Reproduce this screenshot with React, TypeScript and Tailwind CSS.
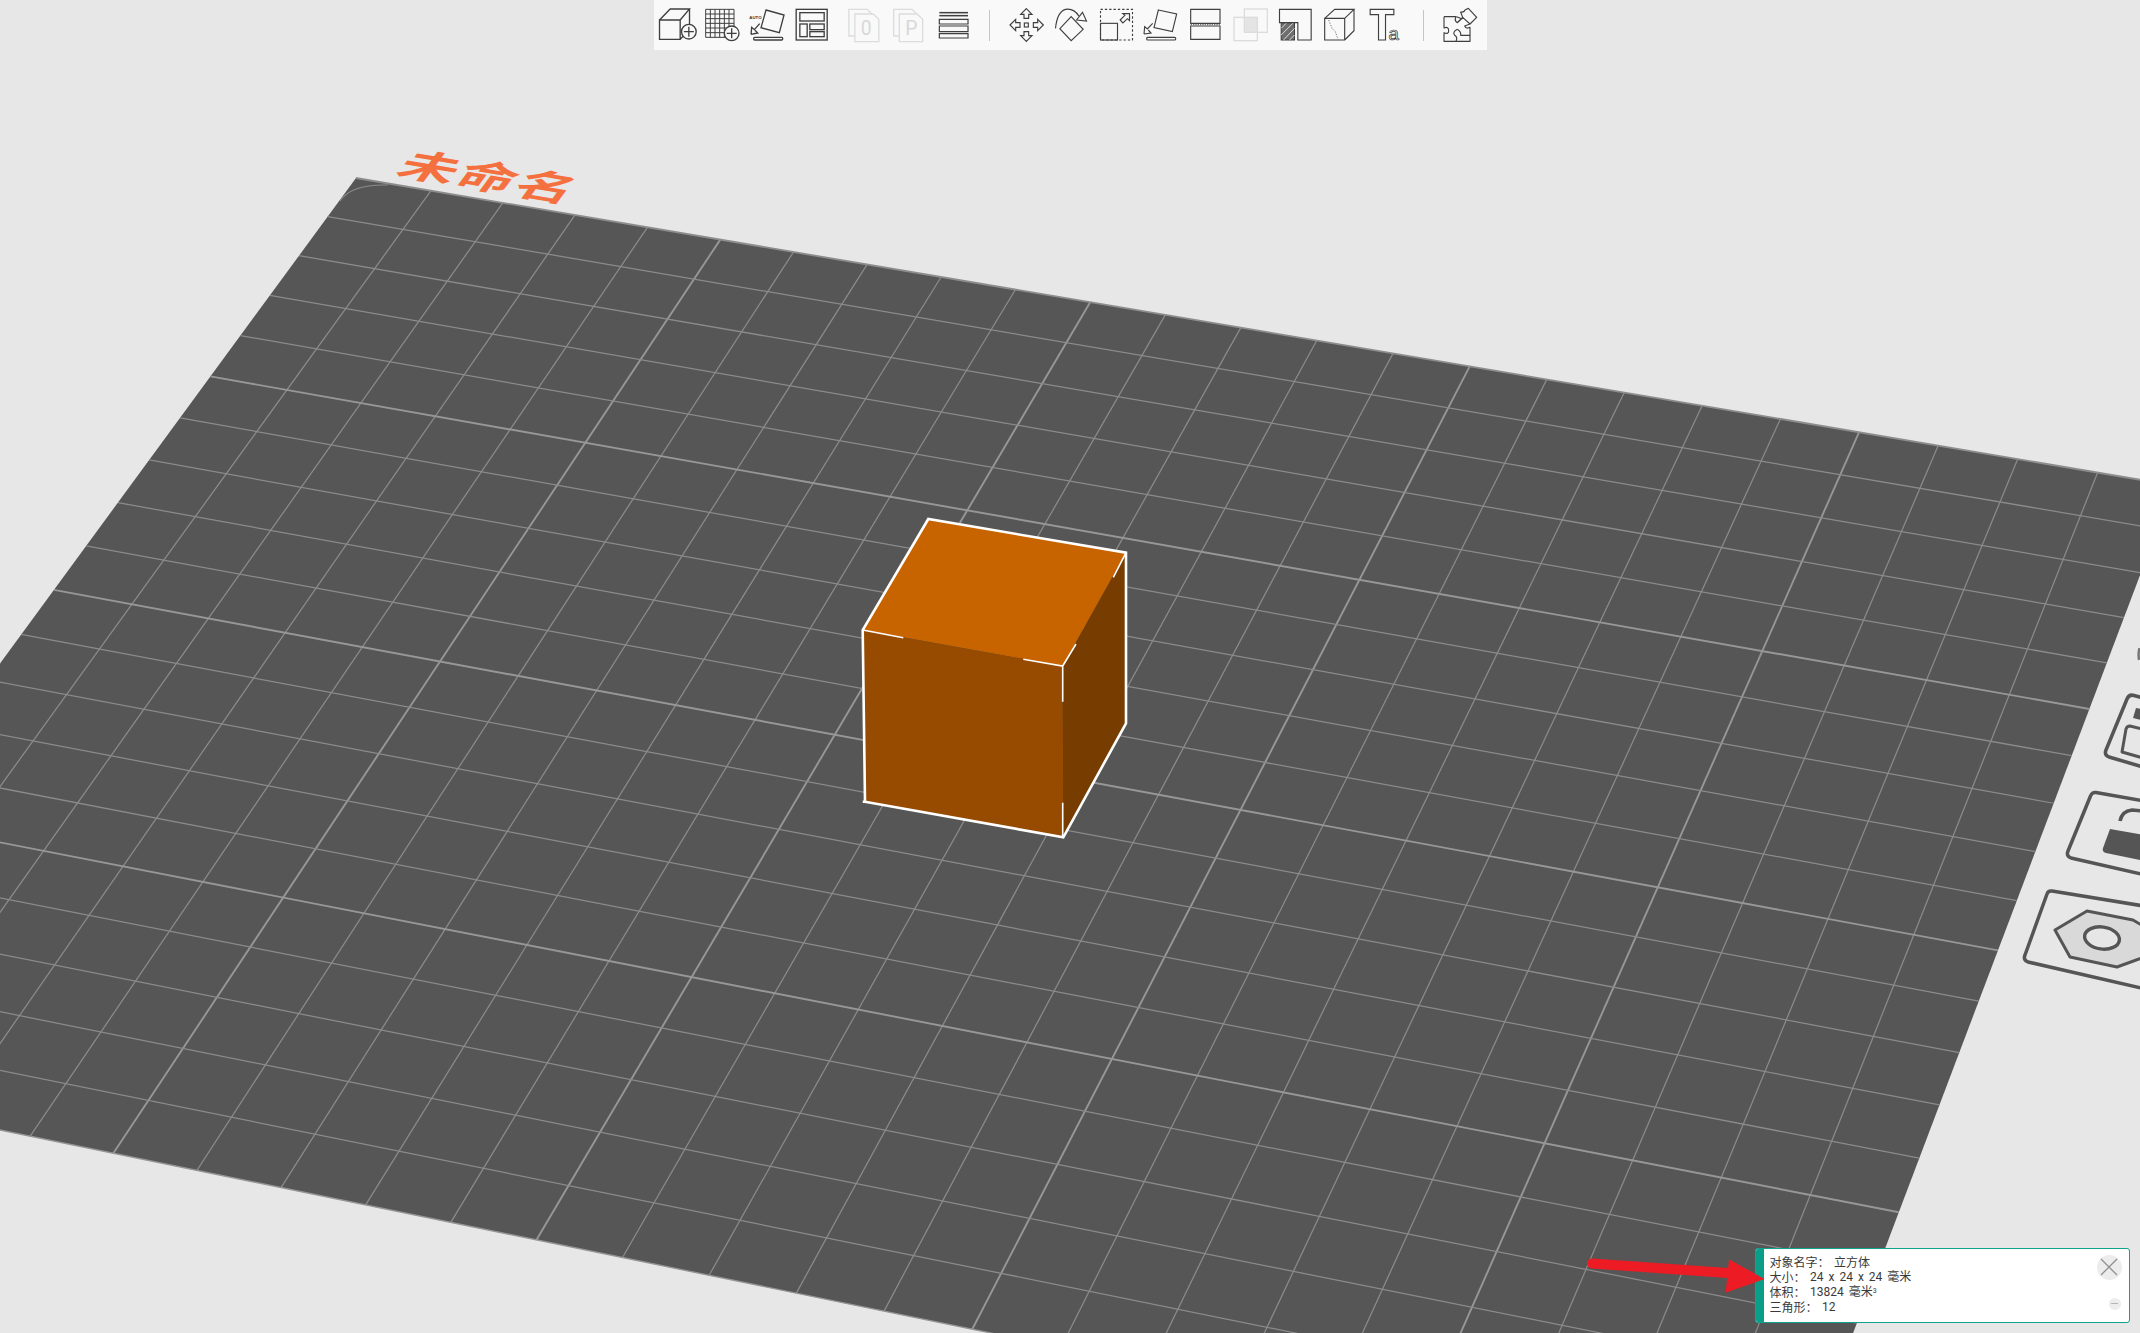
import React from "react";

type P = [number, number];
const TL: P = [356, 178];
const TR: P = [2174, 485.5];
const BR: P = [1791, 1497];
const BL: P = [-297.5, 1069];

function makeMap(p0: P, p1: P, p2: P, p3: P) {
  const dx1 = p1[0] - p2[0], dx2 = p3[0] - p2[0], sx = p0[0] - p1[0] + p2[0] - p3[0];
  const dy1 = p1[1] - p2[1], dy2 = p3[1] - p2[1], sy = p0[1] - p1[1] + p2[1] - p3[1];
  const den = dx1 * dy2 - dx2 * dy1;
  const g = (sx * dy2 - dx2 * sy) / den, h = (dx1 * sy - sx * dy1) / den;
  const a = p1[0] - p0[0] + g * p1[0], b = p3[0] - p0[0] + h * p3[0], c = p0[0];
  const d = p1[1] - p0[1] + g * p1[1], e = p3[1] - p0[1] + h * p3[1], f = p0[1];
  return (u: number, v: number): P => {
    const w = g * u + h * v + 1;
    return [(a * u + b * v + c) / w, (d * u + e * v + f) / w];
  };
}
const map = makeMap(TL, TR, BR, BL);
const COLS = 24, ROWS = 20;

function GridLine({ a, b, major }: { a: P; b: P; major: boolean }) {
  return <line x1={a[0]} y1={a[1]} x2={b[0]} y2={b[1]} stroke={major ? "#979797" : "#8b8b8b"} strokeWidth={major ? 1.9 : 1.25} />;
}

function Bed() {
  const lines: React.ReactNode[] = [];
  for (let i = 1; i < COLS; i++) lines.push(<GridLine key={"c" + i} a={map((i + 0.05) / COLS, 0)} b={map(i / COLS, 1)} major={i % 5 === 0} />);
  for (let j = 1; j < ROWS; j++) lines.push(<GridLine key={"r" + j} a={map(0, j / ROWS)} b={map(1, j / ROWS)} major={j % 5 === 0} />);
  const poly = [TL, TR, BR, BL].map((p) => p.join(",")).join(" ");
  return (
    <svg className="absolute left-0 top-0" width={2140} height={1333} viewBox="0 0 2140 1333">
      <polygon points={poly} fill="#555655" />
      {lines}
      <line x1={TL[0]} y1={TL[1]} x2={TR[0]} y2={TR[1]} stroke="#8d8d8d" strokeWidth={1.8} />
      <line x1={BL[0]} y1={BL[1]} x2={BR[0]} y2={BR[1]} stroke="#959595" strokeWidth={1.4} />
      <path d="M340 201 Q351 184 388 185" fill="none" stroke="#8b8b8b" strokeWidth={1.1} />
      <text
        transform="matrix(1 0.1688 -0.407 0.555 394 174)"
        fontFamily="'Noto Sans CJK SC', sans-serif"
        fontWeight={700}
        fontSize={56}
        letterSpacing={2}
        fill="#f5703f"
      >
        未命名
      </text>

      {/* cube */}
      <polygon points="928.3,519 1126,552.7 1062.7,666 862.7,630" fill="#c86400" />
      <polygon points="862.7,630 1062.7,666 1063.3,837.3 865,801.7" fill="#964b00" />
      <polygon points="1126,552.7 1126,723.3 1063.3,837.3 1062.7,666" fill="#773c00" />
      <path d="M862.7 801.7 L865 801.7 L1063.3 837.3 L1126 723.3 L1126 552.7 L928.3 519 L862.7 630 L865 801.7" fill="none" stroke="#fff" strokeWidth={2.6} />
      <path d="M862.7 630 L903.3 637.7 M1023.3 659.3 L1062.7 666 L1076 644 M1126 552.7 L1113.3 577.3 M1062.7 666 L1062.7 701.7 M1062.7 837 L1062.7 802.7" fill="none" stroke="#fff" strokeWidth={1.6} />

      {/* side buttons, on the wall of the bed */}
      <g fill="none" stroke="#555" strokeWidth={3.5} strokeLinejoin="round">
        <path d="M2150 700 L2134 695.5 Q2129 694 2127 699 L2106 750 Q2104 755 2109 757 L2150 769" />
        <path d="M2150 731 L2130 726 Q2127 726 2126 729 L2122 752 L2150 760" strokeWidth={3} />
        <path d="M2136 708 L2150 711 L2150 722 L2133 718 Z" fill="#555" stroke="none" />
        <path d="M2150 802 L2096 792.5 Q2092 792 2090.5 796 L2068 851 Q2066 856 2071 858 L2150 876" />
        <path d="M2120 821 Q2122 811 2132 810 L2142 811" strokeWidth={3.6} />
        <path d="M2110 829 L2150 836 L2150 862 L2106 853 Q2102 852 2103 848 Z" fill="#555" stroke="none" />
        <path d="M2150 907 L2052 891 Q2048 890.5 2047 894 L2025 955 Q2023 960 2028 962 L2150 990" />
        <path d="M2055 930 L2087 911 L2133 920 L2150 930 L2150 955 L2117 967 L2070 957 Z" fill="#d9d9d9" strokeWidth={3} />
        <ellipse cx={2102} cy={938} rx={17.5} ry={11} transform="rotate(8 2102 938)" fill="#e6e6e6" strokeWidth={3.4} />
        <path d="M2139.5 648 Q2138 653 2139 660" strokeWidth={2.5} stroke="#777" />
      </g>
    </svg>
  );
}

const S = { fill: "none", stroke: "#3f3f3f", strokeWidth: 4 } as const;
const F = { fill: "none", stroke: "#dcdcdc", strokeWidth: 4 } as const;

function Ic({ x, children }: { x: number; children: React.ReactNode }) {
  return (
    <svg className="block shrink-0" width={44.7} height={50} viewBox={`${x} 0 134 150`}>
      {children}
    </svg>
  );
}

function PlusCircle({ cx, cy }: { cx: number; cy: number }) {
  return (
    <g {...S}>
      <circle cx={cx} cy={cy} r={22} fill="#f9f9f9" />
      <path d={`M${cx - 15} ${cy} H${cx + 15} M${cx} ${cy - 15} V${cy + 15}`} />
    </g>
  );
}

function Toolbar() {
  return (
    <div className="mx-auto flex h-[50px] w-[833px] items-center bg-[#f9f9f9] pl-[1.6px]">
      <Ic x={16.5}>
        <g {...S}>
          <path d="M30 60 H92 V118 H30 Z M30 60 L62 27 H120 L92 60 M92 118 L120 90 V27" />
        </g>
        <PlusCircle cx={118} cy={95} />
      </Ic>
      <Ic x={150}>
        <g {...S} strokeWidth={3}>
          <path d="M167 28 H252 V112 H167 Z M181 28 V112 M195 28 V112 M209 28 V112 M223 28 V112 M237 28 V112 M167 42 H252 M167 56 H252 M167 70 H252 M167 84 H252 M167 98 H252" />
        </g>
        <PlusCircle cx={245} cy={100} />
      </Ic>
      <Ic x={282}>
        <text x={298} y={57} fontFamily="'Liberation Sans', sans-serif" fontWeight={700} fontSize={13} fill="#333">AUTO</text>
        <g {...S}>
          <path d="M348 30 L402 45 L388 98 L333 83 Z" />
          <path d="M303 103 L305 82 L313 89 L329 71 M303 103 L323 99 L315 91" />
          <rect x={311} y={112} width={87} height={8} rx={3} />
        </g>
      </Ic>
      <Ic x={412.5}>
        <g {...S}>
          <rect x={434} y={28} width={93} height={92} />
          <rect x={445} y={38} width={73} height={25} />
          <rect x={445} y={72} width={22} height={38} />
          <rect x={475} y={72} width={43} height={17} />
          <rect x={475} y={95} width={43} height={15} />
        </g>
      </Ic>
      <div className="w-[7.5px] shrink-0" />
      <Ic x={571.5}>
        <g {...F}>
          <path d="M613 108 H595 V28 H650 L664 42" />
          <path d="M613 42 H668 L685 58 V125 H613 Z" />
        </g>
        <text x={631} y={105} fontFamily="'Roboto', sans-serif" fontSize={58} fill="#d8d8d8">0</text>
      </Ic>
      <Ic x={705}>
        <g {...F}>
          <path d="M745 108 H728 V28 H783 L797 42" />
          <path d="M745 42 H798 L815 58 V125 H745 Z" />
        </g>
        <text x={763} y={105} fontFamily="'Roboto', sans-serif" fontSize={58} fill="#d8d8d8">P</text>
      </Ic>
      <Ic x={837}>
        <g fill="none" stroke="#3f3f3f">
          <path d="M862 38 H948" strokeWidth={4.5} />
          <path d="M862 47 H948" strokeWidth={4.5} />
          <path d="M862 58 H948 V72 H862 Z M862 78 H948 V95 H862 Z M862 101 H948 V114 H862 Z" strokeWidth={3.6} />
        </g>
      </Ic>
      <div className="ml-[14px] mr-[14px] h-[31px] w-px shrink-0 bg-[#c4c4c4]" />
      <Ic x={1062}>
        <g {...S} strokeWidth={3.4}>
          <path d="M1129 26 L1146 43 H1136 V55 H1122 V43 H1112 Z" />
          <path d="M1129 124 L1146 107 H1136 V95 H1122 V107 H1112 Z" />
          <path d="M1080 75 L1097 58 V68 H1110 V82 H1097 V92 Z" />
          <path d="M1180 75 L1163 58 V68 H1150 V82 H1163 V92 Z" />
          <rect x={1123} y={69} width={12} height={12} />
        </g>
      </Ic>
      <Ic x={-34.5}>
        <g {...S} strokeWidth={3.4}>
          <path d="M32 50 L68 88 L32 122 L-2 86 Z" />
          <path d="M-15 85 Q-10 35 15 28 Q40 24 55 48" />
          <path d="M48 60 L78 63 L66 37 Z" />
        </g>
      </Ic>
      <Ic x={97.5}>
        <g {...S} strokeWidth={3.4}>
          <rect x={117} y={28} width={96} height={92} strokeDasharray="7 6" />
          <rect x={117} y={70} width={51} height={50} />
          <path d="M176 60 L190 46 L184 41 H204 V62 L198 56 L184 69 Z" />
        </g>
      </Ic>
      <Ic x={237}>
        <g {...S} strokeWidth={3.4}>
          <path d="M298 30 L353 42 L340 95 L285 83 Z" />
          <path d="M255 102 L257 80 L265 87 L281 70 M255 102 L276 99 L268 90" />
          <rect x={263} y={112} width={87} height={8} rx={3} />
        </g>
      </Ic>
      <Ic x={369}>
        <g {...S} strokeWidth={3.4}>
          <path d="M392 28 H480 V70 H392 Z M392 78 H480 V118 H392 Z" />
          <path d="M392 74 H480" strokeDasharray="4 3" strokeWidth={2.5} />
        </g>
      </Ic>
      <Ic x={504}>
        <rect x={553} y={52} width={39} height={45} fill="#e4e4e4" />
        <g {...F}>
          <rect x={553} y={27} width={69} height={70} />
          <rect x={522} y={52} width={70} height={70} />
        </g>
      </Ic>
      <Ic x={640.5}>
        <rect x={665} y={68} width={40} height={52} fill="#6e6e6e" stroke="#3f3f3f" strokeWidth={3} />
        <path d="M665 85 L682 68 M665 105 L702 68 M672 120 L705 85 M690 120 L705 105" stroke="#ddd" strokeWidth={3} fill="none" />
        <g {...S} strokeWidth={3.4}>
          <path d="M660 28 H755 V120 H715 V68 H660 Z" />
        </g>
      </Ic>
      <Ic x={777}>
        <g {...S} strokeWidth={3.4}>
          <path d="M800 55 H860 V120 H800 Z M800 55 L830 28 H888 L860 55 M888 28 V92 L860 120" />
          <path d="M812 60 L822 85 L832 95 L840 118" strokeDasharray="4 4" strokeWidth={2.6} stroke="#666" />
        </g>
      </Ic>
      <div className="w-[2px] shrink-0" />
      <Ic x={913.5}>
        <g {...S} strokeWidth={3.4}>
          <path d="M932 28 H1003 V44 H978 V120 H957 V44 H932 Z" />
        </g>
        <text x={987} y={120} fontFamily="'Liberation Sans', sans-serif" fontSize={56} fill="none" stroke="#3f3f3f" strokeWidth={2.2}>a</text>
      </Ic>
      <div className="ml-[14px] mr-[14px] h-[31px] w-px shrink-0 bg-[#c4c4c4]" />
      <Ic x={1134}>
        <g {...S} strokeWidth={3.4} strokeLinejoin="round">
          <path d="M1152 50 H1188 Q1182 62 1192 68 L1205 56 L1190 50 M1152 50 V84 Q1166 78 1166 92 Q1166 104 1152 98 V124 H1188 Q1194 112 1184 106 Q1176 96 1192 88" />
          <path d="M1192 88 Q1204 96 1202 106 L1230 106 V124 H1188" />
          <path d="M1230 106 V82 Q1218 88 1214 78 L1230 72 L1208 52 Q1198 62 1192 68" />
          <path d="M1208 52 L1202 36 Q1212 38 1215 30 L1225 25 L1250 52 L1230 72" />
        </g>
      </Ic>
    </div>
  );
}

function InfoRow({ label, children }: { label: string; children: React.ReactNode }) {
  return (
    <div className="flex h-[15px] items-center gap-[4.5px] whitespace-nowrap">
      <span>{label}</span>
      <span>{children}</span>
    </div>
  );
}

function InfoPanel() {
  return (
    <div className="absolute left-[1755px] top-[1248px] flex h-[75px] w-[375px] rounded-[3px] border border-[#0fa28d] bg-white font-['Noto_Sans_CJK_SC',sans-serif] text-[12px] text-[#3a3a3a]">
      <div className="w-[8px] rounded-l-[2px] bg-[#0a9d88]" />
      <div className="flex flex-col pl-[5.5px] pt-[5px]">
        <InfoRow label={"对象名字\uFF1A"}>立方体</InfoRow>
        <InfoRow label={"大小\uFF1A"}>
          <span className="font-['Roboto','Noto_Sans_CJK_SC',sans-serif] [word-spacing:2px]">24 x 24 x 24 毫米</span>
        </InfoRow>
        <InfoRow label={"体积\uFF1A"}>
          <span className="font-['Roboto','Noto_Sans_CJK_SC',sans-serif] [word-spacing:2px]">
            13824 毫米<sup className="text-[7px]">3</sup>
          </span>
        </InfoRow>
        <InfoRow label={"三角形\uFF1A"}>
          <span className="font-['Roboto','Noto_Sans_CJK_SC',sans-serif]">12</span>
        </InfoRow>
      </div>
      <div className="ml-auto mr-[7.5px] flex flex-col items-center pt-[5.5px]">
        <div className="flex h-[25px] w-[25px] items-center justify-center rounded-full bg-[#ececec]">
          <svg width={18} height={18} viewBox="0 0 18 18">
            <path d="M1 1 L17 17 M17 1 L1 17" stroke="#8f8f8f" strokeWidth={1.3} />
          </svg>
        </div>
        <div className="ml-[11px] mt-[18px] flex h-[12px] w-[12px] items-center justify-center rounded-full bg-[#ececec]">
          <div className="h-[1.5px] w-[7px] bg-[#b5b5b5]" />
        </div>
      </div>
    </div>
  );
}

function RedArrow() {
  return (
    <svg className="absolute left-[1580px] top-[1250px]" width={190} height={50} viewBox="1580 1250 190 50">
      <path d="M1592 1263.5 L1735 1273.5" stroke="#ed1c24" strokeWidth={10} strokeLinecap="round" fill="none" />
      <polygon points="1729,1259.3 1764.5,1279 1725.6,1292.7" fill="#ed1c24" />
    </svg>
  );
}

export default function App() {
  return (
    <div className="relative h-[1333px] w-[2140px] overflow-hidden bg-[#e7e7e7]">
      <Bed />
      <div className="relative">
        <Toolbar />
      </div>
      <InfoPanel />
      <RedArrow />
    </div>
  );
}
